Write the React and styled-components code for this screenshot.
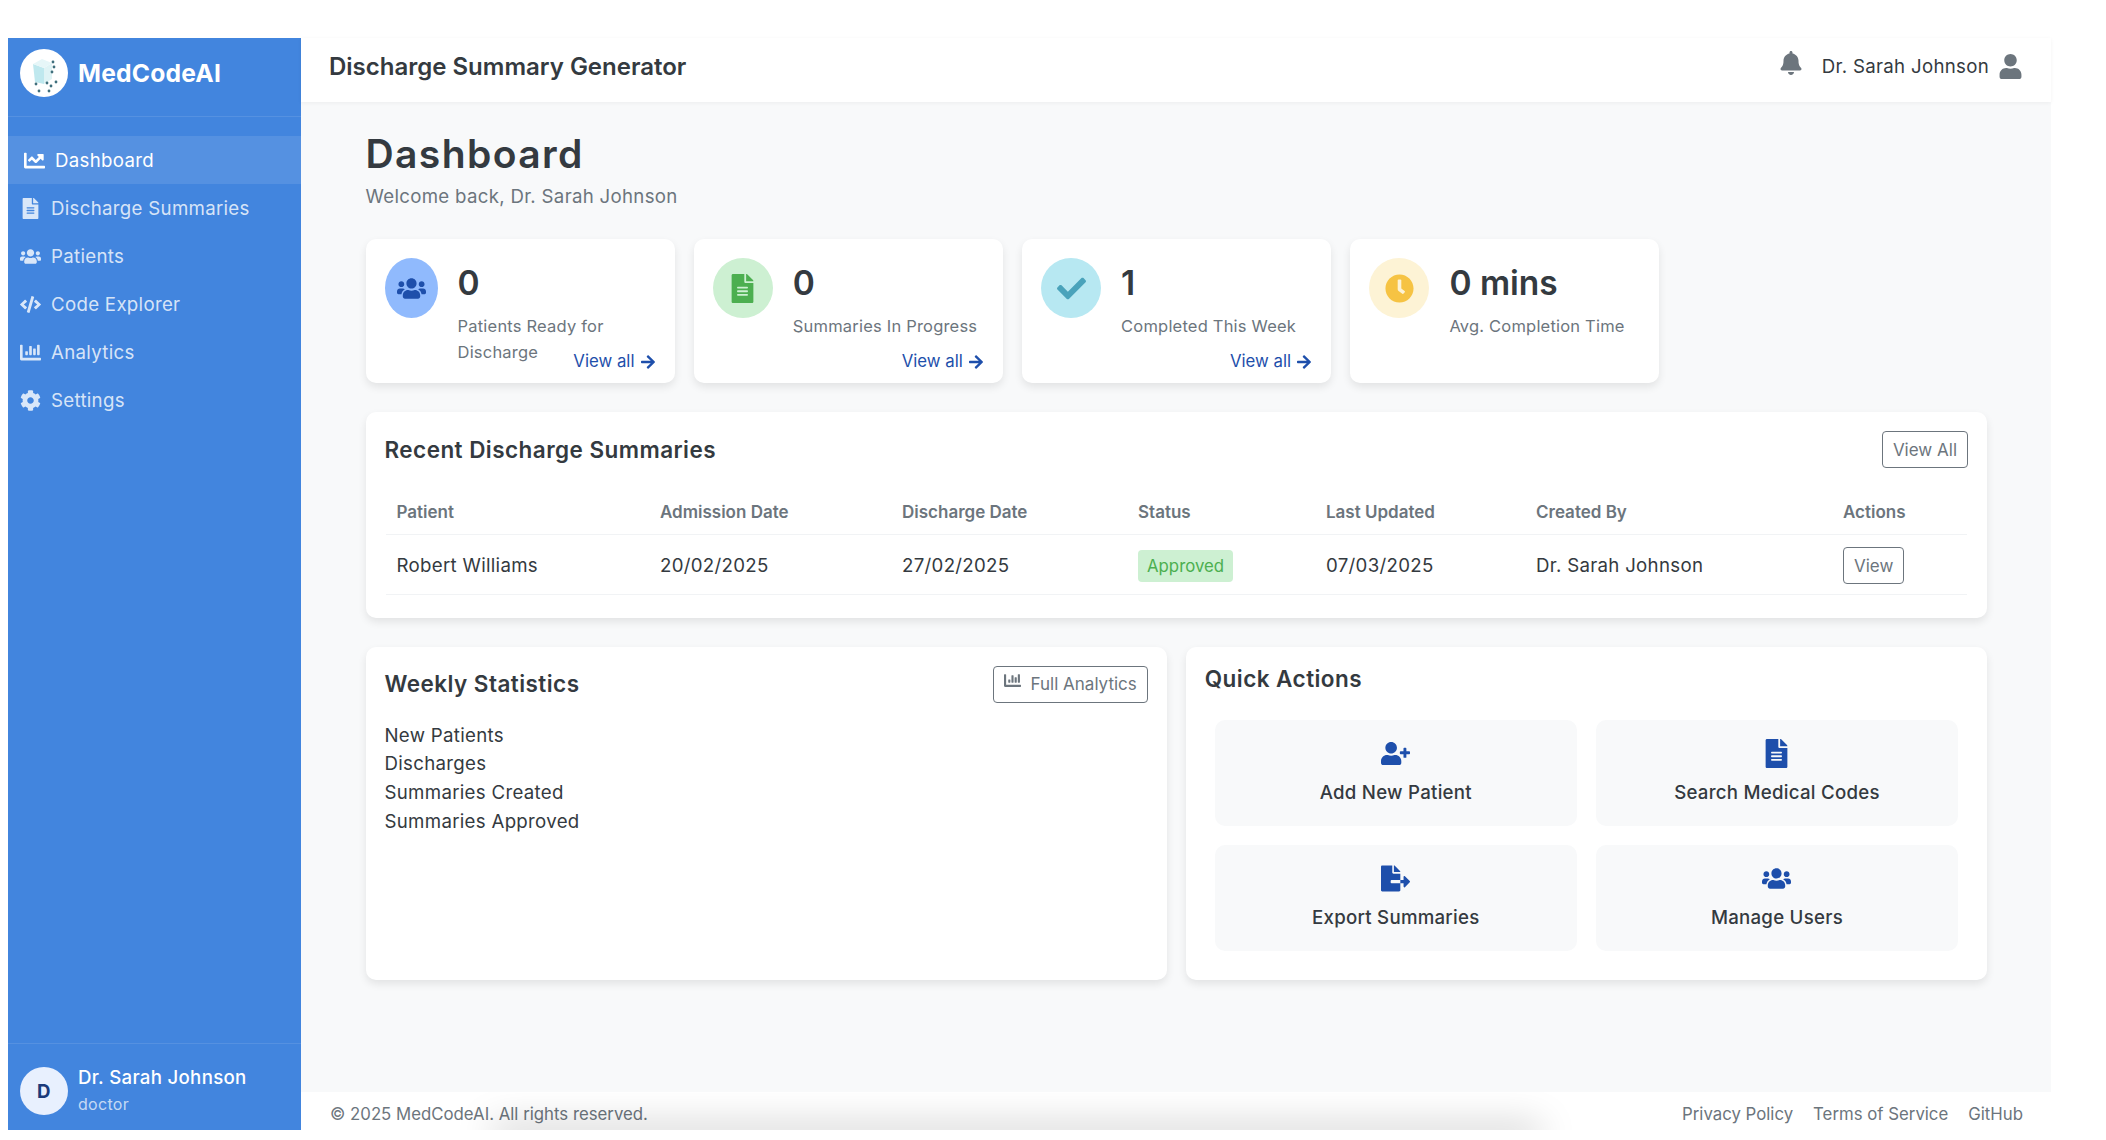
import React from 'react';
import styled, { createGlobalStyle } from 'styled-components';
import {
  FaArrowRight,
  FaBell,
  FaChartBar,
  FaChartLine,
  FaCheck,
  FaClock,
  FaCode,
  FaCog,
  FaFileAlt,
  FaFileExport,
  FaUser,
  FaUserPlus,
  FaUsers,
} from 'react-icons/fa';

const GlobalStyle = createGlobalStyle`
  html, body {
    margin: 0;
    padding: 0;
    height: 100%;
    background: #fff;
    overflow: hidden;
  }
  * { box-sizing: border-box; }
  body {
    font-family: 'Inter', 'Liberation Sans', sans-serif;
    color: #343a40;
    letter-spacing: 0.3px;
  }
`;

const headingFont = `'Inter', 'Liberation Sans', sans-serif`;

const Frame = styled.div`
  display: flex;
  height: 1092px;
  width: 2043px;
  margin: 38px 0 0 8px;
`;

const Sidebar = styled.aside`
  width: 293px;
  flex-shrink: 0;
  display: flex;
  flex-direction: column;
  background: #4285de;
  color: #fff;
`;

const Brand = styled.div`
  display: flex;
  align-items: flex-start;
  gap: 10px;
  height: 79px;
  padding: 11px 12px 0;
  border-bottom: 1.33px solid rgba(255, 255, 255, 0.1);
`;

const LogoCircle = styled.div`
  width: 48px;
  height: 48px;
  border-radius: 50%;
  background: #fff;
  display: flex;
  flex-shrink: 0;
`;

const BrandName = styled.span`
  font-family: ${headingFont};
  font-size: 24.67px;
  line-height: 48px;
  font-weight: 700;
  letter-spacing: 0.2px;
`;

const Nav = styled.nav`
  flex: 1;
  padding-top: 19px;
`;

const NavItem = styled.a`
  display: flex;
  align-items: center;
  gap: 10px;
  height: 48px;
  padding-left: ${(p) => (p.$active ? '16px' : '12px')};
  font-size: 18.67px;
  color: ${(p) => (p.$active ? '#fff' : 'rgba(255, 255, 255, 0.8)')};
  background: ${(p) => (p.$active ? 'rgba(255, 255, 255, 0.1)' : 'transparent')};
  svg {
    width: 21px;
    height: 21px;
    flex-shrink: 0;
  }
`;

const SidebarUser = styled.div`
  display: flex;
  align-items: flex-start;
  gap: 10px;
  height: 87px;
  padding: 23px 12px 0;
  border-top: 1.33px solid rgba(255, 255, 255, 0.1);
`;

const Avatar = styled.div`
  width: 48px;
  height: 48px;
  border-radius: 50%;
  background: #e8f0fe;
  color: #1a3a7a;
  font-weight: 700;
  font-size: 18.67px;
  display: flex;
  align-items: center;
  justify-content: center;
`;

const UserMeta = styled.div`
  margin-top: -2px;
`;

const UserName = styled.div`
  font-size: 18.67px;
  font-weight: 500;
  line-height: 26px;
`;

const UserRole = styled.div`
  font-size: 16px;
  line-height: 26px;
  color: rgba(255, 255, 255, 0.7);
`;

const MainColumn = styled.div`
  flex: 1;
  min-width: 0;
  display: flex;
  flex-direction: column;
  background: #f8f9fa;
`;

const Header = styled.header`
  height: 64px;
  flex-shrink: 0;
  background: #fff;
  display: flex;
  align-items: center;
  justify-content: space-between;
  padding: 0 28px;
  box-shadow: 0 1.33px 4px rgba(0, 0, 0, 0.05);
`;

const PageTitle = styled.div`
  font-size: 24px;
  font-weight: 600;
  letter-spacing: 0;
  color: #343a40;
  position: relative;
  top: -4px;
`;

const HeaderRight = styled.div`
  display: flex;
  align-items: center;
  font-size: 18.67px;
  color: #343a40;
  position: relative;
  top: -4px;
`;

const BellButton = styled.span`
  display: flex;
  color: #6c757d;
  margin-right: 19px;
  position: relative;
  top: -3px;
`;

const UserIcon = styled.span`
  display: flex;
  color: #6c757d;
  margin-left: 9px;
`;

const Content = styled.main`
  flex: 1;
  padding: 29px 64px 0 64.5px;
`;

const Title = styled.h1`
  font-family: ${headingFont};
  margin: 0 0 8px;
  font-size: 39px;
  line-height: 45px;
  font-weight: 600;
  letter-spacing: 1.4px;
  color: #343a40;
`;

const Subtitle = styled.p`
  margin: 0 0 30px;
  font-size: 18.67px;
  line-height: 25px;
  color: #6c757d;
`;

const StatsRow = styled.div`
  display: grid;
  grid-template-columns: repeat(4, 309px);
  gap: 19.3px;
  margin-bottom: 29px;
`;

const Card = styled.section`
  background: #fff;
  border-radius: 10px;
  box-shadow: 0 4px 8px rgba(0, 0, 0, 0.09);
`;

const StatCard = styled(Card)`
  position: relative;
  display: flex;
  gap: 20px;
  height: 144px;
  padding: 19px;
`;

const StatIcon = styled.div`
  width: 60px;
  height: 60px;
  flex-shrink: 0.8;
  border-radius: 50%;
  background: ${(p) => p.$bg};
  color: ${(p) => p.$fg};
  display: flex;
  align-items: center;
  justify-content: center;
  flex-basis: 60px;
  svg {
    flex-shrink: 0;
  }
`;

const StatValue = styled.div`
  font-size: 33.5px;
  line-height: 50px;
  font-weight: 600;
  letter-spacing: 0;
  color: #343a40;
`;

const StatLabel = styled.div`
  margin-top: 5px;
  font-size: 16.5px;
  line-height: 26px;
  letter-spacing: 0.2px;
  color: #6c757d;
`;

const StatLink = styled.a`
  position: absolute;
  right: 19px;
  bottom: 9px;
  display: flex;
  align-items: center;
  gap: 5px;
  font-size: 16.8px;
  line-height: 25px;
  letter-spacing: 0;
  color: #1e4fab;
`;

const RecentCard = styled(Card)`
  padding: 19px 19px 23px;
  margin-bottom: 29px;
`;

const CardHeader = styled.div`
  display: flex;
  align-items: center;
  justify-content: space-between;
  margin-bottom: ${(p) => p.$gap || '19px'};
`;

const CardTitle = styled.h2`
  font-family: ${headingFont};
  margin: 0;
  font-size: 22.5px;
  font-weight: 600;
  line-height: 30px;
  letter-spacing: 0.45px;
  color: #343a40;
`;

const OutlineButton = styled.button`
  display: inline-flex;
  align-items: center;
  justify-content: center;
  gap: 10px;
  height: 37px;
  padding: 0 10px;
  font-family: inherit;
  font-size: 17px;
  letter-spacing: 0;
  color: #6c757d;
  background: transparent;
  border: 1.33px solid #6c757d;
  border-radius: 4px;
`;

const ButtonIcon = styled.span`
  display: flex;
  position: relative;
  top: -4px;
`;

const Table = styled.table`
  width: 1580.5px;
  margin-left: 1.5px;
  table-layout: fixed;
  border-collapse: collapse;
`;

const Th = styled.th`
  width: ${(p) => p.$w}px;
  height: 44px;
  padding: 0 10.5px;
  text-align: left;
  font-size: 17px;
  font-weight: 600;
  letter-spacing: 0;
  color: #6c757d;
  border-bottom: 1.33px solid #f1f3f5;
`;

const Td = styled.td`
  height: 60px;
  padding: 3px 10.5px 0;
  font-size: 18.67px;
  color: #343a40;
  border-bottom: 1.33px solid #f1f3f5;
`;

const Badge = styled.span`
  display: inline-flex;
  align-items: center;
  height: 32px;
  padding: 0 9px;
  font-size: 16.8px;
  letter-spacing: 0;
  color: #4caf50;
  background: #cdf0d2;
  border-radius: 4px;
`;

const LowerRow = styled.div`
  display: grid;
  grid-template-columns: 1fr 1fr;
  gap: 19px;
`;

const PanelCard = styled(Card)`
  height: 333px;
  padding: 19px;
`;

const StatLines = styled.div`
  font-size: 18.67px;
  line-height: 28.8px;
  color: #343a40;
`;

const QuickHead = styled.div`
  height: 26px;
  display: flex;
  align-items: center;
  margin-bottom: 18px;
`;

const ActionsGrid = styled.div`
  display: grid;
  grid-template-columns: 1fr 1fr;
  gap: 19px;
  padding: 10px;
`;

const ActionTile = styled.div`
  height: 106px;
  background: #f8f9fa;
  border-radius: 10px;
  padding-top: 19px;
  display: flex;
  flex-direction: column;
  align-items: center;
  gap: 12px;
  font-size: 18.67px;
  font-weight: 500;
  line-height: 25px;
  letter-spacing: 0.25px;
  color: #343a40;
  svg {
    color: #1e4fab;
  }
`;

const Footer = styled.footer`
  position: relative;
  height: 38px;
  flex-shrink: 0;
  margin-top: auto;
  background: #fff;
  overflow: hidden;
  display: flex;
  align-items: center;
  justify-content: space-between;
  padding: 6px 28px 0 29px;
  font-size: 16.8px;
  letter-spacing: 0;
  color: #6c757d;
  &::after {
    content: '';
    position: absolute;
    left: 195px;
    bottom: -8px;
    width: 1040px;
    height: 8px;
    box-shadow: 0 0 36px 4px rgba(0, 0, 0, 0.25);
  }
`;

const FooterLinks = styled.div`
  display: flex;
  gap: 20px;
`;

const Logo = () => (
  <svg viewBox="0 0 48 48" width="48" height="48" aria-hidden="true">
    <path d="M13 15 L24 19 L24 35 L15 33 Z" fill="#bfe8ee" />
    <path d="M24 19 L32 14 L32 30 L24 35 Z" fill="#dff3f5" />
    <path d="M13 15 L22 10 L32 14 L24 19 Z" fill="#e6f6f8" />
    {[
      [33, 13],
      [34, 18],
      [32, 23],
      [16, 35],
      [27, 34],
      [31, 37],
      [36, 33],
      [19, 42],
      [29, 42],
    ].map(([cx, cy]) => (
      <circle key={`${cx}-${cy}`} cx={cx} cy={cy} r="1.4" fill="#3f6f7c" />
    ))}
  </svg>
);

const navItems = [
  { label: 'Dashboard', icon: FaChartLine, active: true },
  { label: 'Discharge Summaries', icon: FaFileAlt },
  { label: 'Patients', icon: FaUsers },
  { label: 'Code Explorer', icon: FaCode },
  { label: 'Analytics', icon: FaChartBar },
  { label: 'Settings', icon: FaCog },
];

const stats = [
  { value: '0', label: 'Patients Ready for Discharge', icon: FaUsers, bg: '#90bafd', fg: '#1e4fab', link: true },
  { value: '0', label: 'Summaries In Progress', icon: FaFileAlt, bg: '#cdf0d2', fg: '#4caf50', link: true },
  { value: '1', label: 'Completed This Week', icon: FaCheck, bg: '#b7e8f2', fg: '#4aa3bb', link: true },
  { value: '0 mins', label: 'Avg. Completion Time', icon: FaClock, bg: '#fdf3d5', fg: '#f6c343' },
];

const columns = [
  ['Patient', 263.5],
  ['Admission Date', 242],
  ['Discharge Date', 236],
  ['Status', 188],
  ['Last Updated', 210],
  ['Created By', 307],
  ['Actions', 134],
];

const actions = [
  { label: 'Add New Patient', icon: FaUserPlus },
  { label: 'Search Medical Codes', icon: FaFileAlt },
  { label: 'Export Summaries', icon: FaFileExport },
  { label: 'Manage Users', icon: FaUsers },
];

const App = () => (
  <>
    <GlobalStyle />
    <Frame>
      <Sidebar>
        <Brand>
          <LogoCircle>
            <Logo />
          </LogoCircle>
          <BrandName>MedCodeAI</BrandName>
        </Brand>
        <Nav>
          {navItems.map(({ label, icon: Icon, active }) => (
            <NavItem key={label} $active={active}>
              <Icon />
              {label}
            </NavItem>
          ))}
        </Nav>
        <SidebarUser>
          <Avatar>D</Avatar>
          <UserMeta>
            <UserName>Dr. Sarah Johnson</UserName>
            <UserRole>doctor</UserRole>
          </UserMeta>
        </SidebarUser>
      </Sidebar>
      <MainColumn>
        <Header>
          <PageTitle>Discharge Summary Generator</PageTitle>
          <HeaderRight>
            <BellButton>
              <FaBell size={24} />
            </BellButton>
            Dr. Sarah Johnson
            <UserIcon>
              <FaUser size={25} />
            </UserIcon>
          </HeaderRight>
        </Header>
        <Content>
          <Title>Dashboard</Title>
          <Subtitle>Welcome back, Dr. Sarah Johnson</Subtitle>
          <StatsRow>
            {stats.map(({ value, label, icon: Icon, bg, fg, link }) => (
              <StatCard key={label}>
                <StatIcon $bg={bg} $fg={fg}>
                  <Icon size={29} />
                </StatIcon>
                <div>
                  <StatValue>{value}</StatValue>
                  <StatLabel>{label}</StatLabel>
                </div>
                {link && (
                  <StatLink>
                    View all <FaArrowRight size={16} />
                  </StatLink>
                )}
              </StatCard>
            ))}
          </StatsRow>
          <RecentCard>
            <CardHeader $gap="22px">
              <CardTitle>Recent Discharge Summaries</CardTitle>
              <OutlineButton>View All</OutlineButton>
            </CardHeader>
            <Table>
              <thead>
                <tr>
                  {columns.map(([name, w]) => (
                    <Th key={name} $w={w}>
                      {name}
                    </Th>
                  ))}
                </tr>
              </thead>
              <tbody>
                <tr>
                  <Td>Robert Williams</Td>
                  <Td>20/02/2025</Td>
                  <Td>27/02/2025</Td>
                  <Td>
                    <Badge>Approved</Badge>
                  </Td>
                  <Td>07/03/2025</Td>
                  <Td>Dr. Sarah Johnson</Td>
                  <Td>
                    <OutlineButton>View</OutlineButton>
                  </Td>
                </tr>
              </tbody>
            </Table>
          </RecentCard>
          <LowerRow>
            <PanelCard>
              <CardHeader>
                <CardTitle>Weekly Statistics</CardTitle>
                <OutlineButton>
                  <ButtonIcon>
                    <FaChartBar size={17} />
                  </ButtonIcon>
                  Full Analytics
                </OutlineButton>
              </CardHeader>
              <StatLines>
                <div>New Patients</div>
                <div>Discharges</div>
                <div>Summaries Created</div>
                <div>Summaries Approved</div>
              </StatLines>
            </PanelCard>
            <PanelCard>
              <QuickHead>
                <CardTitle>Quick Actions</CardTitle>
              </QuickHead>
              <ActionsGrid>
                {actions.map(({ label, icon: Icon }) => (
                  <ActionTile key={label}>
                    <Icon size={29} />
                    {label}
                  </ActionTile>
                ))}
              </ActionsGrid>
            </PanelCard>
          </LowerRow>
        </Content>
        <Footer>
          <span>© 2025 MedCodeAI. All rights reserved.</span>
          <FooterLinks>
            <span>Privacy Policy</span>
            <span>Terms of Service</span>
            <span>GitHub</span>
          </FooterLinks>
        </Footer>
      </MainColumn>
    </Frame>
  </>
);

export default App;
